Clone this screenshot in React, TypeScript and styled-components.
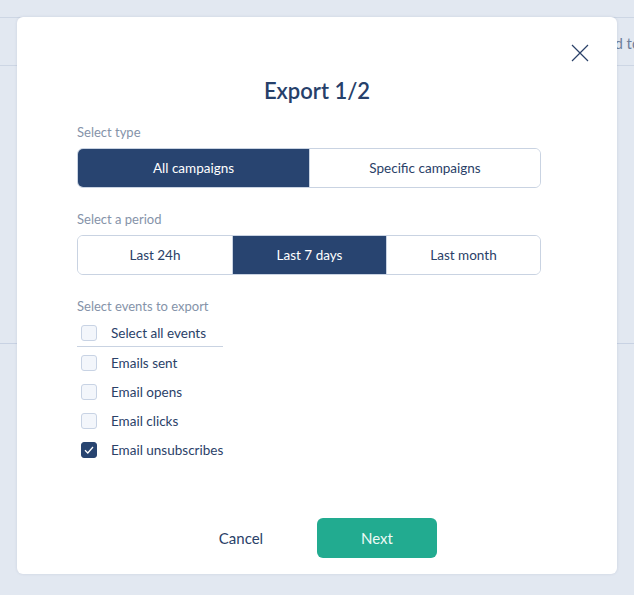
import React, { useState } from "react";
import styled, { createGlobalStyle } from "styled-components";

const Global = createGlobalStyle`
  html, body { margin: 0; padding: 0; }
  body {
    width: 634px; height: 595px; overflow: hidden;
    background: #e2e8f1;
    font-family: "Source Sans Pro", Lato, "Noto Sans", sans-serif;
  }
  * { box-sizing: border-box; }
`;

const Page = styled.div`
  position: relative;
  width: 634px;
  height: 595px;
  background: #e2e8f1;
  overflow: hidden;
`;

const BgTop = styled.div`
  height: 18px;
  border-bottom: 1px solid #cdd6e4;
`;

const BgHeader = styled.div`
  height: 48px;
  border-bottom: 1px solid #cdd6e4;
  display: flex;
  align-items: center;
  padding-left: 590px;
  padding-top: 2px;
  white-space: nowrap;
  color: #6e7f9c;
  font-size: 15px;
`;

const BgBody = styled.div`
  height: 278px;
  border-bottom: 1px solid #c8d2e3;
`;

const Overlay = styled.div`
  position: absolute;
  inset: 0;
  display: flex;
  align-items: flex-start;
  justify-content: flex-start;
  padding: 17px 0 0 17px;
`;

const Modal = styled.div`
  position: relative;
  width: 600px;
  height: 557px;
  background: #ffffff;
  border-radius: 6px;
  box-shadow: 0 0 3px rgba(40, 60, 100, 0.12);
  padding: 60px 76px 0 60px;
  display: flex;
  flex-direction: column;
`;

const Close = styled.button`
  position: absolute;
  top: 27px;
  right: 28px;
  width: 18px;
  height: 18px;
  padding: 0;
  border: 0;
  background: transparent;
  cursor: pointer;
  display: flex;
`;

const Title = styled.h1`
  margin: 0 0 19px;
  text-align: center;
  font-size: 22px;
  line-height: 28px;
  font-weight: 600;
  color: #26406a;
  padding-left: 16px;
`;

const Label = styled.div`
  font-size: 13px;
  line-height: 17px;
  color: #8593a9;
  margin-bottom: 7px;
`;

const Segmented = styled.div<{ $cols: number }>`
  display: grid;
  grid-template-columns: repeat(${(p) => p.$cols}, 1fr);
  height: 40px;
  border: 1px solid #c9d3e2;
  border-radius: 6px;
  overflow: hidden;
  margin-bottom: 23px;
`;

const Segment = styled.button<{ $active: boolean }>`
  border: 0;
  border-left: 1px solid #c9d3e2;
  &:first-child { border-left: 0; }
  background: ${(p) => (p.$active ? "#284470" : "#ffffff")};
  color: ${(p) => (p.$active ? "#ffffff" : "#2a4168")};
  font-family: inherit;
  font-size: 13.5px;
  padding: 0;
  cursor: pointer;
`;

const List = styled.div`
  display: flex;
  flex-direction: column;
  margin-top: -3px;
`;

const Row = styled.label<{ $divider?: boolean }>`
  display: flex;
  align-items: center;
  gap: 14px;
  height: ${(p) => (p.$divider ? "28px" : "29px")};
  width: 146px;
  padding-left: 4px;
  white-space: nowrap;
  font-size: 13.5px;
  color: #2a4168;
  cursor: pointer;
  border-bottom: ${(p) => (p.$divider ? "1px solid #c9d3e2" : "0")};
  margin-bottom: ${(p) => (p.$divider ? "1px" : "0")};
`;

const Box = styled.span<{ $checked: boolean }>`
  flex: none;
  width: 16px;
  height: 16px;
  border-radius: 3px;
  border: 1.5px solid ${(p) => (p.$checked ? "#284470" : "#c8d3e4")};
  background: ${(p) => (p.$checked ? "#284470" : "#f3f6fb")};
  display: flex;
  align-items: center;
  justify-content: center;
`;

const Footer = styled.div`
  margin-top: auto;
  margin-bottom: 16px;
  display: flex;
  justify-content: flex-start;
  align-items: center;
  gap: 26px;
  padding-left: 114px;
`;

const CancelBtn = styled.button`
  border: 0;
  background: transparent;
  color: #2a4168;
  font-family: inherit;
  font-size: 15px;
  width: 100px;
  padding: 0;
  cursor: pointer;
`;

const NextBtn = styled.button`
  width: 120px;
  height: 40px;
  border: 0;
  border-radius: 6px;
  background: #22ab90;
  color: #eefaf6;
  font-family: inherit;
  font-size: 15px;
  cursor: pointer;
`;

const events = [
  "Emails sent",
  "Email opens",
  "Email clicks",
  "Email unsubscribes",
];

export default function App() {
  const [type, setType] = useState(0);
  const [period, setPeriod] = useState(1);
  const [checked, setChecked] = useState<boolean[]>([false, false, false, true]);
  const all = checked.every(Boolean);

  return (
    <Page>
      <Global />
      <BgTop />
      <BgHeader>Send to</BgHeader>
      <BgBody />
      <Overlay>
        <Modal>
          <Close aria-label="Close">
            <svg width="18" height="18" viewBox="0 0 18 18">
              <path d="M1 1 L17 17 M17 1 L1 17" stroke="#2a4168" strokeWidth="1.2" fill="none" />
            </svg>
          </Close>
          <Title>Export 1/2</Title>
          <Label>Select type</Label>
          <Segmented $cols={2}>
            {["All campaigns", "Specific campaigns"].map((t, i) => (
              <Segment key={t} $active={type === i} onClick={() => setType(i)}>
                {t}
              </Segment>
            ))}
          </Segmented>
          <Label>Select a period</Label>
          <Segmented $cols={3}>
            {["Last 24h", "Last 7 days", "Last month"].map((t, i) => (
              <Segment key={t} $active={period === i} onClick={() => setPeriod(i)}>
                {t}
              </Segment>
            ))}
          </Segmented>
          <Label>Select events to export</Label>
          <List>
            <Row $divider onClick={() => setChecked(checked.map(() => !all))}>
              <Box $checked={all} />
              Select all events
            </Row>
            {events.map((e, i) => (
              <Row
                key={e}
                onClick={() => setChecked(checked.map((c, j) => (j === i ? !c : c)))}
              >
                <Box $checked={checked[i]}>
                  {checked[i] && (
                    <svg width="10" height="8" viewBox="0 0 10 8">
                      <path d="M1 4.2 L3.8 7 L9 1" stroke="#ffffff" strokeWidth="1.3" fill="none" />
                    </svg>
                  )}
                </Box>
                {e}
              </Row>
            ))}
          </List>
          <Footer>
            <CancelBtn>Cancel</CancelBtn>
            <NextBtn>Next</NextBtn>
          </Footer>
        </Modal>
      </Overlay>
    </Page>
  );
}
